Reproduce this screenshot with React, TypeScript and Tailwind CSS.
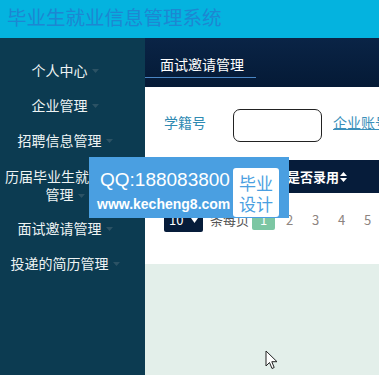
const cjk = { fontFamily: '"Noto Sans CJK SC", "Liberation Sans", sans-serif' }

function Caret({ className = 'fill-[#2c5264]' }: { className?: string }) {
  return (
    <svg width="7" height="4" viewBox="0 0 7 4" className={`inline-block ml-[4px] align-middle ${className}`}>
      <path d="M0 0h7L3.5 4z" />
    </svg>
  )
}

function SortIcon() {
  return (
    <svg width="7" height="10" viewBox="0 0 7 10" className="inline-block ml-[1px] fill-white">
      <path d="M3.5 0L7 4H0z M0 6h7L3.5 10z" />
    </svg>
  )
}

const menu = ['个人中心', '企业管理', '招聘信息管理']
const menuAfter = ['面试邀请管理', '投递的简历管理']

export default function App() {
  return (
    <div className="relative w-[379px] h-[375px] overflow-hidden flex flex-col bg-[#e3efea]" style={cjk}>
      <header className="h-[38px] shrink-0 bg-[#04b3df] flex items-center pl-[7px]">
        <h1 className="text-[19.5px] leading-none text-[#1d87d2] -mt-[5px]">毕业生就业信息管理系统</h1>
      </header>

      <div className="flex flex-1 min-h-0">
        <aside className="w-[145px] shrink-0 bg-[#0c3b51] pt-[15px] pr-[15px] text-[14px] text-[#eef4f4]">
          {menu.map((m) => (
            <div key={m} className="h-[35px] flex items-center justify-center">
              <span>{m}</span>
              <Caret />
            </div>
          ))}
          <div className="h-[53px] flex flex-col items-center justify-center leading-[18px] text-center">
            <div className="mr-[22px]">历届毕业生就业</div>
            <div>
              <span>管理</span>
              <Caret />
            </div>
          </div>
          {menuAfter.map((m) => (
            <div key={m} className="h-[35px] flex items-center justify-center">
              <span>{m}</span>
              <Caret />
            </div>
          ))}
        </aside>

        <main className="flex-1 min-w-0 flex flex-col">
          <div className="h-[49px] shrink-0 bg-gradient-to-b from-[#0a2446] to-[#051a36]">
            <div className="inline-block pt-[16px] pl-[15px] pr-[12px] pb-[3px] border-b border-[#4a86c4] text-[14px] leading-[20px] text-white">
              面试邀请管理
            </div>
          </div>

          <div className="bg-white pl-[19px] pt-[22px] pb-[32px]">
            <div className="flex items-center text-[14px] whitespace-nowrap">
              <span className="text-[#2f8ab2] mb-[6px]">学籍号</span>
              <div className="ml-[27px] w-[89px] h-[33px] shrink-0 border border-[#222] rounded-[7px]" />
              <span className="ml-[11px] mb-[6px] text-[#3b8fba] underline">企业账号</span>
            </div>

            <div className="mt-[18px] h-[33px] bg-[#061c3a] flex items-center text-[13px] font-bold text-white whitespace-nowrap">
              <span className="w-[123px] shrink-0 pl-[4px]">学籍号</span>
              <span>是否录用</span>
              <SortIcon />
            </div>

            <div className="mt-[15px] h-[24px] flex items-center text-[13px] whitespace-nowrap">
              <div className="w-[48px] h-[24px] bg-[#061c3a] rounded-[2px] flex items-center justify-between pl-[5px] pr-[5px] text-white">
                <span>10</span>
                <svg width="7" height="5" viewBox="0 0 7 5" className="fill-white">
                  <path d="M0 0h7L3.5 5z" />
                </svg>
              </div>
              <span className="ml-[7px] text-[#555]">条每页</span>
              <div className="ml-[3px] flex gap-[3px]">
                <span className="w-[23px] h-[19px] rounded-[2px] bg-[#7cc6a3] text-white flex items-center justify-center">1</span>
                {['2', '3', '4', '5'].map((n) => (
                  <span key={n} className="w-[23px] h-[19px] text-[#8d8480] flex items-center justify-center">
                    {n}
                  </span>
                ))}
              </div>
            </div>
          </div>

          <div className="flex-1 bg-[#e3efea]" />
        </main>
      </div>

      {/* watermark overlay */}
      <div className="absolute left-[89px] top-[157px] w-[200px] h-[61px] bg-[#4a9fe1] flex items-start pl-[8px] text-white">
        <div className="w-[136px] shrink-0 flex flex-col pt-[12px]" style={{ fontFamily: '"Liberation Sans", Arial, sans-serif' }}>
          <span className="text-[19px] leading-[22px] pl-[3px]">QQ:188083800</span>
          <span className="text-[14px] leading-[18px] font-bold mt-[4px]">www.kecheng8.com</span>
        </div>
        <div className="w-[46px] h-[49px] mt-[11px] bg-white rounded-[3px] flex flex-col items-center justify-center text-[#4a9fe1] text-[17px] leading-[21px]" style={cjk}>
          <span>毕业</span>
          <span>设计</span>
        </div>
      </div>

      {/* mouse pointer */}
      <svg className="absolute left-[265px] top-[350px]" width="13" height="20" viewBox="0 0 13 20">
        <path d="M1 1v15l3.5-3.5 2.5 6 2.2-1-2.4-5.8H12z" fill="white" stroke="#222" strokeWidth="1" strokeLinejoin="round" />
      </svg>
    </div>
  )
}
